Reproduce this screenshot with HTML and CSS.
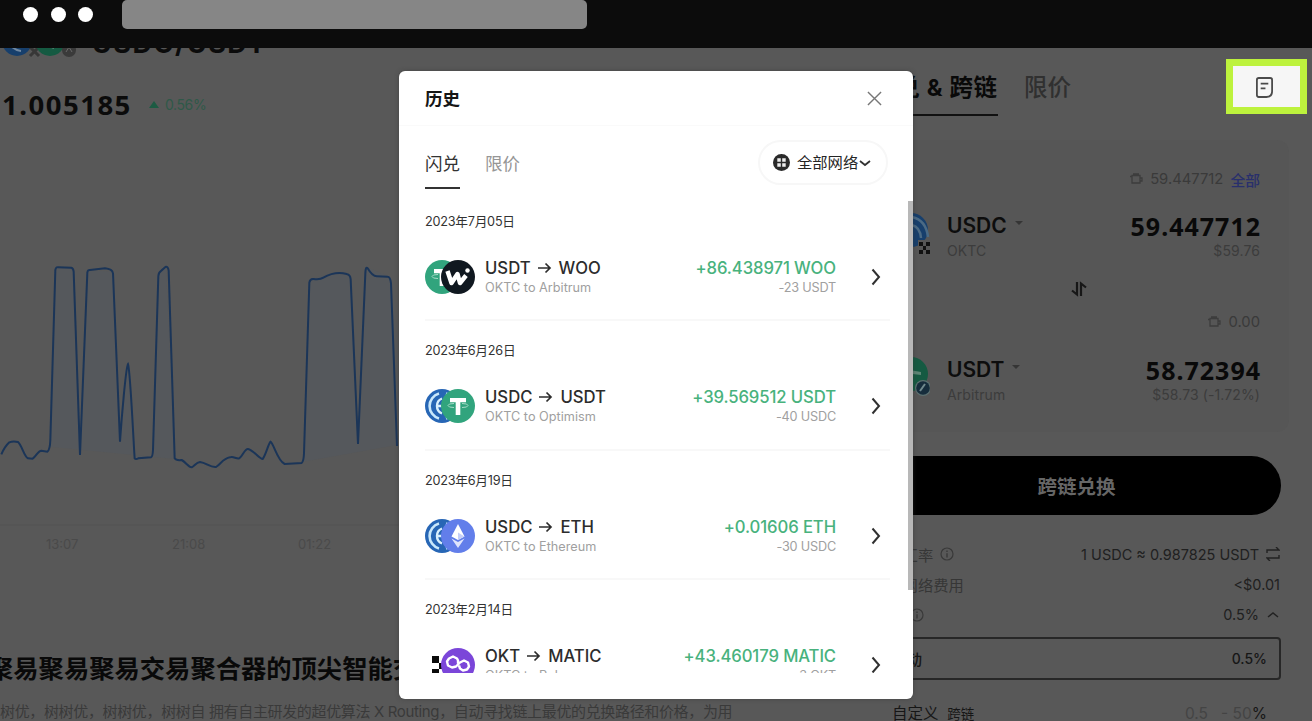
FILE: index.html
```html
<!DOCTYPE html>
<html lang="zh-CN">
<head>
<meta charset="utf-8">
<title>历史</title>
<link rel="stylesheet" href="styles.css">
</head>
<body>
<svg class="defs" width="0" height="0">
  <symbol id="usdt" viewBox="0 0 34 34"><circle cx="17" cy="17" r="17" fill="#31a47d"/><path d="M9 9h16v4.200H19.300V26h-4.600V13.200H9z" fill="#fff"/><path d="M7 16.500q0-2 6-2M21 14.500q6 0 6 2t-6 2M13 18.500q-6 0-6-2" fill="none" stroke="#a9dcc9" stroke-width="1"/></symbol>
  <symbol id="usdc" viewBox="0 0 34 34"><circle cx="17" cy="17" r="17" fill="#2766b5"/><path d="M14 4.500a13 13 0 0 0 0 25M21 4.500a13 13 0 0 1 0 25" fill="none" stroke="#c9e8fb" stroke-width="2.600"/><path d="M17 9.500a8 8 0 0 0-5 7.500a8 8 0 0 0 5 7.500M12 17h6" fill="none" stroke="#d8effc" stroke-width="2.400"/></symbol>
  <symbol id="woo" viewBox="0 0 34 34"><circle cx="17" cy="17" r="17" fill="#101820"/><path d="M6.500 11l4 12 6-9 2.500 9L25 15.500" fill="none" stroke="#fff" stroke-width="4.500" stroke-linejoin="round"/><circle cx="26.500" cy="10.500" r="2.200" fill="#fff"/></symbol>
  <symbol id="eth" viewBox="0 0 34 34"><circle cx="17" cy="17" r="17" fill="#627eea"/><path d="M17 5l6.500 12.500L17 21l-6.500-3.500z" fill="#fff"/><path d="M10.500 19.500L17 23l6.500-3.500L17 29z" fill="#dfe5fc"/><path d="M17 13.500l6.500 4L17 21z" fill="#c5cff8"/></symbol>
  <symbol id="matic" viewBox="0 0 34 34"><circle cx="17" cy="17" r="17" fill="#7b46d9"/><path d="M17 15.500v-3l-1-2-4-2-4 2-2 3 1 4 4 2 4-1 4-4 4-2 4 2 1 4-2 3-4 1-3-2-1-3" fill="none" stroke="#fff" stroke-width="2.400" stroke-linejoin="round"/></symbol>
  <symbol id="okt" viewBox="0 0 34 34"><path d="M7 8h7v7H7zM14 15h6v6h-6zM7 21h7v7H7zM20 8h7v7h-7zM20 21h7v7h-7z" fill="#0b0b0b"/></symbol>
  <symbol id="next" viewBox="0 0 12 20"><path d="M2.500 2.500l6.500 7.500-6.500 7.500" fill="none" stroke="#303030" stroke-width="2"/></symbol>
  <symbol id="wallet" viewBox="0 0 14 14"><path d="M3 3.500h8v7.500H3zM1 4.500h2M11 6h2v3h-2M4 2h6" fill="none" stroke="#3d3d3d" stroke-width="1.300"/></symbol>
  <symbol id="arrow" viewBox="0 0 14 12"><path d="M0 6h12M7.500 1.500L12 6l-4.500 4.500" fill="none" stroke="#2c2c2c" stroke-width="1.700"/></symbol>
  <symbol id="info" viewBox="0 0 14 14"><circle cx="7" cy="7" r="6" fill="none" stroke="#393939" stroke-width="1.200"/><path d="M7 3.500v1.500M7 6.300v4.200" stroke="#393939" stroke-width="1.400"/></symbol>
</svg>

<div class="window">
  <header class="topbar">
    <i class="dot"></i><i class="dot"></i><i class="dot"></i>
    <div class="address"></div>
  </header>

  <main class="page">
    <section class="market">
      <div class="pair">
        <svg class="pair-icons" viewBox="0 0 78 40"><circle cx="17" cy="12" r="15" fill="#173f6c"/><path d="M8 13q5 8 13 9M13 9q5 8 13 9" stroke="#7188a0" stroke-width="2" fill="none"/><path d="M30 18l9 9m0-9l-9 9" stroke="#373737" stroke-width="3"/><circle cx="50" cy="12" r="15" fill="#155a42"/><path d="M42 14l12 5" stroke="#64897a" stroke-width="2"/><circle cx="69" cy="21" r="7" fill="#3a3a3a"/><path d="M66 23l3-5 3 5" stroke="#686868" fill="none"/></svg>
        <span class="pair-name">USDC/USDT</span>
      </div>
      <div class="quote"><b class="price">1.005185</b><i class="up"></i><span class="change">0.56%</span></div>
      <svg class="chart" viewBox="0 0 1200 720">
        <path class="area" d="M150 620L168 80L218 84L240 645L264 90L338 95L360 605L384 370L404 655L456 650L478 98L498 80L524 657zM910 665L930 118L1000 98L1050 108L1074 612L1100 82L1170 110L1190 615z"/>
        <path class="line" d="M4 643Q14 620 28 607Q40 602 54 606C66 616 72 650 84 655L98 656C108 650 114 632 124 632L142 635Q150 630 151 600L166 90Q168 80 174 82L214 83Q220 84 221 95L240 645L262 98Q263 89 270 90L315 85Q337 87 339 100L360 605C365 530 378 380 384 372C391 390 400 600 404 655Q407 659 415 655L453 652Q458 650 459 630L475 108Q476 96 485 91L496 81Q504 78 506 92L524 655Q528 662 545 660C558 667 565 681 575 682C584 678 588 667 600 666C620 669 630 683 648 681C662 672 670 655 690 652C700 648 708 657 718 655C730 645 734 626 744 627C760 630 778 657 788 657C798 645 805 610 812 605C822 613 832 662 854 672L905 669Q911 665 912 640L928 128Q930 116 940 117Q960 120 970 113C1000 96 1020 97 1040 102Q1051 104 1052 118L1074 612L1096 100Q1097 77 1103 85Q1117 109 1130 109L1163 110Q1171 110 1173 130L1191 618"/>
      </svg>
      <div class="axis"><span>13:07</span><span>21:08</span><span>01:22</span></div>
      <h2 class="headline">聚易聚易聚易交易聚合器的顶尖智能交易</h2>
      <p class="copy">树优，树树优，树树优，树树自 拥有自主研发的超优算法 X Routing，自动寻找链上最优的兑换路径和价格，为用<br>成本，树树优，为用户提供最优的链上交易聚合服务，链上最优的兑换路径</p>
    </section>

    <section class="swap">
      <nav class="modes">
        <span class="mode active">闪兑 &amp; 跨链</span><span class="mode">限价</span>
        <button class="history"><svg viewBox="0 0 20 24"><path d="M4 2h12q2 0 2 2v12q0 6-6 6H4q-2 0-2-2V4q0-2 2-2zM6 8h8M6 13h5" fill="none" stroke="#4b4b4b" stroke-width="1.900"/></svg></button>
      </nav>
      <div class="card">
        <div class="balance"><svg><use href="#wallet"/></svg><span>59.447712</span><span class="all">全部</span></div>
        <div class="token">
          <svg class="token-icon" viewBox="0 0 36 48"><circle cx="17" cy="20" r="17" fill="#173f6c"/><path d="M18 15q8 2 9 13M18 7q14 3 16 20" stroke="#4b6a84" stroke-width="2.500" fill="none"/><path d="M24 30h13v16H24z" fill="#565656"/><path d="M25 32h4v4h-4zM32 32h4v4h-4zM29 36h3v4h-3zM25 40h4v4h-4zM32 40h4v4h-4z" fill="#111"/></svg>
          <div><b class="symbol">USDC</b><i class="caret"></i><small>OKTC</small></div>
          <div class="amount"><b>59.447712</b><small>$59.76</small></div>
        </div>
        <svg class="flip" viewBox="0 0 18 18"><path d="M7 2v12.500L2 10.500M11 16V3.500l5 4" fill="none" stroke="#171717" stroke-width="2.200"/></svg>
        <div class="balance second"><svg><use href="#wallet"/></svg><span>0.00</span></div>
        <div class="token lower">
          <svg class="token-icon" viewBox="0 0 36 48"><circle cx="17" cy="20" r="17" fill="#155a42"/><path d="M10 15l17 3v3l-17-2z" fill="#5d8575"/><circle cx="29" cy="34" r="8" fill="#5c7070"/><circle cx="29" cy="34" r="6.800" fill="#162d3c"/><path d="M26 37l5-7" stroke="#70898d" stroke-width="2"/></svg>
          <div><b class="symbol">USDT</b><i class="caret"></i><small>Arbitrum</small></div>
          <div class="amount"><b>58.72394</b><small>$58.73 (-1.72%)</small></div>
        </div>
      </div>
      <button class="submit">跨链兑换</button>
      <div class="detail"><span>兑换汇率</span><svg><use href="#info"/></svg><em class="rate">1 USDC ≈ 0.987825 USDT</em><svg class="cycle" viewBox="0 0 14 14"><path d="M1 6V3h12l-3-3M13 8v3H1l3 3" fill="none" stroke="#222" stroke-width="1.400"/></svg></div>
      <div class="detail"><span>预估网络费用</span><em>&lt;$0.01</em></div>
      <div class="detail"><span>滑点</span><svg><use href="#info"/></svg><em>0.5%</em><svg class="fold" viewBox="0 0 14 14"><path d="M2 9l5-4 5 4" fill="none" stroke="#222" stroke-width="1.500"/></svg></div>
      <div class="slippage"><span>自动</span><em>0.5%</em></div>
      <div class="custom"><span>自定义&nbsp; <small>跨链</small></span><em><i>0.5 &nbsp; - 50</i>%</em></div>
    </section>
  </main>

  <div class="modal">
    <div class="modal-head"><h1>历史</h1><svg viewBox="0 0 16 16"><path d="M1 1l14 14M15 1L1 15" stroke="#777" stroke-width="1.500"/></svg></div>
    <div class="filters">
      <span class="tab on">闪兑</span><span class="tab">限价</span>
      <div class="network"><svg class="globe" viewBox="0 0 17 17"><circle cx="8.500" cy="8.500" r="8.500" fill="#2a2a2a"/><path d="M4.300 4.300h3.500v3.500H4.300zM9.200 4.300h3.500v3.500H9.200zM4.300 9.200h3.500v3.500H4.300zM9.200 9.200h3.500v3.500H9.200z" fill="#eee"/></svg><span>全部网络</span><svg class="down" viewBox="0 0 12 8"><path d="M1 2l5 4 5-4" fill="none" stroke="#333" stroke-width="1.800"/></svg></div>
    </div>
    <div class="list">
      <article class="entry">
        <time>2023年7月05日</time>
        <div class="row"><div class="coins"><svg><use href="#usdt"/></svg><svg><use href="#woo"/></svg></div>
          <div class="route"><b>USDT<svg><use href="#arrow"/></svg>WOO</b><small>OKTC to Arbitrum</small></div>
          <div class="result"><b>+86.438971 WOO</b><small>-23 USDT</small></div><svg class="next"><use href="#next"/></svg></div>
      </article>
      <article class="entry">
        <time>2023年6月26日</time>
        <div class="row"><div class="coins"><svg><use href="#usdc"/></svg><svg><use href="#usdt"/></svg></div>
          <div class="route"><b>USDC<svg><use href="#arrow"/></svg>USDT</b><small>OKTC to Optimism</small></div>
          <div class="result"><b>+39.569512 USDT</b><small>-40 USDC</small></div><svg class="next"><use href="#next"/></svg></div>
      </article>
      <article class="entry">
        <time>2023年6月19日</time>
        <div class="row"><div class="coins"><svg><use href="#usdc"/></svg><svg><use href="#eth"/></svg></div>
          <div class="route"><b>USDC<svg><use href="#arrow"/></svg>ETH</b><small>OKTC to Ethereum</small></div>
          <div class="result"><b>+0.01606 ETH</b><small>-30 USDC</small></div><svg class="next"><use href="#next"/></svg></div>
      </article>
      <article class="entry">
        <time>2023年2月14日</time>
        <div class="row"><div class="coins"><svg><use href="#okt"/></svg><svg><use href="#matic"/></svg></div>
          <div class="route"><b>OKT<svg><use href="#arrow"/></svg>MATIC</b><small>OKTC to Polygon</small></div>
          <div class="result"><b>+43.460179 MATIC</b><small>-3 OKT</small></div><svg class="next"><use href="#next"/></svg></div>
      </article>
    </div>
    <div class="scrollbar"></div>
  </div>
</div>
</body>
</html>
```
FILE: styles.css
```css
* { box-sizing: border-box; }
body { margin: 0; font-family: Inter, "Noto Sans CJK SC", sans-serif; color: #161616; background: #585858; }
i, em { font-style: normal; }
small { display: block; }
button { border: 0; padding: 0; font-family: inherit; }
.defs { position: absolute; }
.window { position: relative; width: 1312px; height: 721px; overflow: hidden; background: #585858; }

.topbar { height: 48px; background: #0c0c0c; display: flex; align-items: flex-start; padding-left: 23px; gap: 12.500px; }
.dot { width: 15px; height: 15px; margin-top: 7px; border-radius: 50%; background: #fff; }
.address { width: 465px; height: 29px; margin-left: 16px; background: #868686; border-radius: 5px; }

.page { display: flex; height: 673px; overflow: hidden; }
.market { width: 872px; flex: none; }
.pair { height: 22px; overflow: hidden; display: flex; align-items: flex-end; }
.pair-icons { width: 78px; height: 40px; flex: none; margin-bottom: 1px; }
.pair-name { margin-left: 14px; font-size: 27px; line-height: 34px; letter-spacing: 1.500px; font-weight: 700; margin-bottom: 9px; color: #0b0b0b; }
.quote { height: 40px; margin-top: 14px; display: flex; align-items: center; padding-left: 2px; color: #0b0b0b; }
.price { font-size: 27.500px; letter-spacing: 1.500px; width: 133px; font-family: "Noto Sans"; }
.up { margin-left: 14px; border: 5px solid transparent; border-top: 0; border-bottom: 7px solid #1c5b43; }
.change { margin-left: 6px; font-size: 14px; letter-spacing: -.4px; color: #2f5848; }
.chart { display: block; width: 400px; height: 240px; margin-top: 116px; overflow: hidden; }
.line { fill: none; stroke: #1b3558; stroke-width: 6; }
.area { fill: #535961; opacity: .45; }
.axis { width: 400px; margin-top: 44px; border-top: 2px solid #555; display: flex; padding: 10px 0 0 46px; gap: 90px; font-size: 13px; line-height: 16px; color: #4a4a4a; }
.axis span { width: 36px; }
.headline { margin: 100px 0 0 -12px; height: 34px; line-height: 34px; font-size: 25.300px; font-weight: 700; color: #090909; white-space: nowrap; }
.copy { margin: 15px 0 0; font-size: 15px; line-height: 21px; color: #3a3a3a; white-space: nowrap; letter-spacing: -.35px; }

.swap { width: 417px; flex: none; padding-top: 24px; }
.modes { display: flex; height: 44px; position: relative; }
.mode { font-size: 23.500px; line-height: 31px; height: 44px; margin-right: 26px; font-weight: 500; color: #303030; white-space: nowrap; }
.active { width: 126px; font-weight: 700; letter-spacing: .7px; color: #090909; border-bottom: 2px solid #111; }
.history { position: absolute; left: 354px; top: -13px; width: 81px; height: 55px; border: 7px solid #bdf23d; background: #f6f6f6; display: flex; align-items: center; justify-content: center; }
.history svg { width: 19px; height: 23px; margin-right: 4px; margin-top: 2px; }
.card { margin-top: 24px; height: 292px; padding: 29px 29px 0 22px; background: #565656; border-radius: 12px; }
.balance { height: 20px; display: flex; justify-content: flex-end; align-items: center; font-size: 14.800px; color: #3a3a3a; }
.balance svg { width: 14px; height: 14px; margin-right: 7px; }
.all { color: #282f6c; margin-left: 7px; font-weight: 500; }
.token { display: flex; height: 50px; margin-top: 21px; }
.token-icon { width: 36px; height: 48px; margin-right: 17px; flex: none; }
.symbol { font-size: 21px; line-height: 32px; font-weight: 600; color: #0d0d0d; }
.caret { display: inline-block; margin-left: 8px; vertical-align: 8px; border: 4px solid transparent; border-bottom: 0; border-top-color: #353535; }
.token small { font-size: 14px; line-height: 18px; letter-spacing: .1px; color: #3c3c3c; }
.amount { margin-left: auto; text-align: right; }
.amount b { font-size: 25px; line-height: 32px; display: block; font-weight: 700; letter-spacing: 1px; margin-right: -1px; color: #090909; font-family: "Noto Sans"; }
.flip { display: block; width: 18px; height: 18px; margin: 20px auto 14px; position: relative; left: 2px; }
.lower { margin-top: 22px; }
.submit { display: block; margin-top: 24px; width: 409px; height: 59px; border-radius: 0 30px 30px 0; background: #000; color: #666; font-size: 19.500px; font-weight: 700; }
.submit + .detail { margin-top: 24px; }
.detail { width: 408px; height: 30.300px; display: flex; align-items: center; font-size: 15.300px; color: #363636; white-space: nowrap; }
.detail svg { width: 14px; height: 14px; margin-left: 7px; }
.detail em { margin-left: auto; color: #202020; font-size: 14.500px; }
.slippage { width: 409px; height: 43px; margin-top: 7px; border: 2px solid #272727; border-radius: 4px; display: flex; justify-content: space-between; align-items: center; padding: 0 12px 0 18px; font-size: 15px; font-weight: 500; }
.slippage em { font-size: 14px; }
.custom { display: flex; justify-content: space-between; margin-top: 23px; padding: 0 22px 0 20px; font-size: 15.500px; line-height: 22px; }
.custom small { display: inline; font-size: 13.500px; }
.custom i { color: #444; }

.modal { position: absolute; left: 399px; top: 71px; width: 514px; height: 627.500px; background: #fff; border-radius: 6px; overflow: hidden; box-shadow: 0 0 4px #3338; }
.modal-head { height: 55px; padding: 0 31px 2px 26px; display: flex; align-items: center; justify-content: space-between; border-bottom: 1px solid #fafafa; }
.modal-head h1 { margin: 0; font-size: 17.500px; font-weight: 700; }
.modal-head svg { width: 15px; height: 15px; position: relative; top: 1px; }
.filters { display: flex; height: 66px; padding: 21px 25px 0 26px; }
.tab { font-size: 17.500px; line-height: 33px; margin-right: 25px; color: #969696; height: 42px; }
.tab.on { color: #333; border-bottom: 2px solid #333; }
.network { margin: -7px 0 0 auto; width: 130px; height: 45px; border: 2px solid #f7f7f7; border-radius: 23px; display: flex; align-items: center; padding-left: 13px; font-size: 15.300px; color: #242424; white-space: nowrap; }
.network span { margin-top: -3px; }
.globe { width: 17px; height: 17px; margin-right: 7px; }
.down { width: 12px; height: 8px; margin-left: 1px; }
.list { height: 481px; overflow: hidden; padding: 0 23px 0 26px; }
.entry { height: 129.300px; padding-top: 20px; border-bottom: 2px solid #f8f8f8; }
.entry time { display: block; font-size: 12.700px; line-height: 19px; height: 20px; letter-spacing: -.25px; color: #333; }
.row { height: 40px; margin-top: 25px; display: flex; align-items: center; }
.coins { width: 60px; height: 34px; display: flex; flex: none; }
.coins svg { width: 34px; height: 34px; flex: none; }
.coins svg + svg { margin-left: -18px; }
.route b, .result b { display: flex; align-items: center; font-size: 16.700px; line-height: 22px; font-weight: 500; color: #2c2c2c; white-space: nowrap; }
.route b svg { width: 14px; height: 12px; margin: 0 7px; }
.route small, .result small { font-size: 12.700px; line-height: 18px; color: #a0a0a0; white-space: nowrap; }
.result { margin-left: auto; text-align: right; }
.result b { color: #48b27d; justify-content: flex-end; letter-spacing: -.1px; }
.result small { letter-spacing: -.2px; }
.next { width: 12px; height: 20px; margin-left: 34px; margin-right: 8px; }
.scrollbar { position: absolute; right: 0; top: 130px; width: 5px; height: 389px; background: #b8b8b8; }
```
